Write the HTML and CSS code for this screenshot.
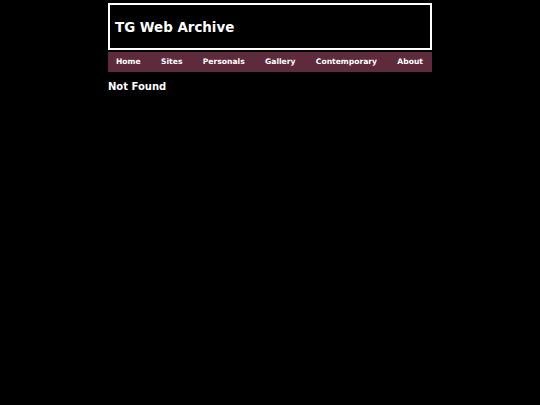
FILE: index.html
```html
<!DOCTYPE html>
<html>
<head>
<meta charset="utf-8">
<link rel="stylesheet" href="styles.css">
</head>
<body>
<div class="page">
  <div class="header"><h1 class="title">TG Web Archive</h1></div>
  <nav class="nav">
    <a href="#">Home</a>
    <a href="#">Sites</a>
    <a href="#">Personals</a>
    <a href="#">Gallery</a>
    <a href="#">Contemporary</a>
    <a href="#">About</a>
  </nav>
  <h2 class="msg">Not Found</h2>
</div>
</body>
</html>
```
FILE: styles.css
```css
html, body { margin: 0; padding: 0; background: #000; color: #fff; font-family: "DejaVu Sans", sans-serif; }
.page { width: 324px; margin: 3px auto 0; }
.header { border: 2px solid #fff; height: 43px; display: flex; align-items: center; padding-left: 5px; }
.title { margin: 2px 0 0; font-size: 13.4px; font-weight: bold; }
.nav { margin-top: 2px; height: 19px; padding-bottom: 1px; background: #5e2b3d; display: flex; align-items: center; justify-content: space-between; padding-left: 8px; padding-right: 9px; }
.nav a { color: #fff; text-decoration: none; font-size: 7.6px; font-weight: bold; }
.msg { margin: 9px 0 0; font-size: 10px; font-weight: bold; }
```
